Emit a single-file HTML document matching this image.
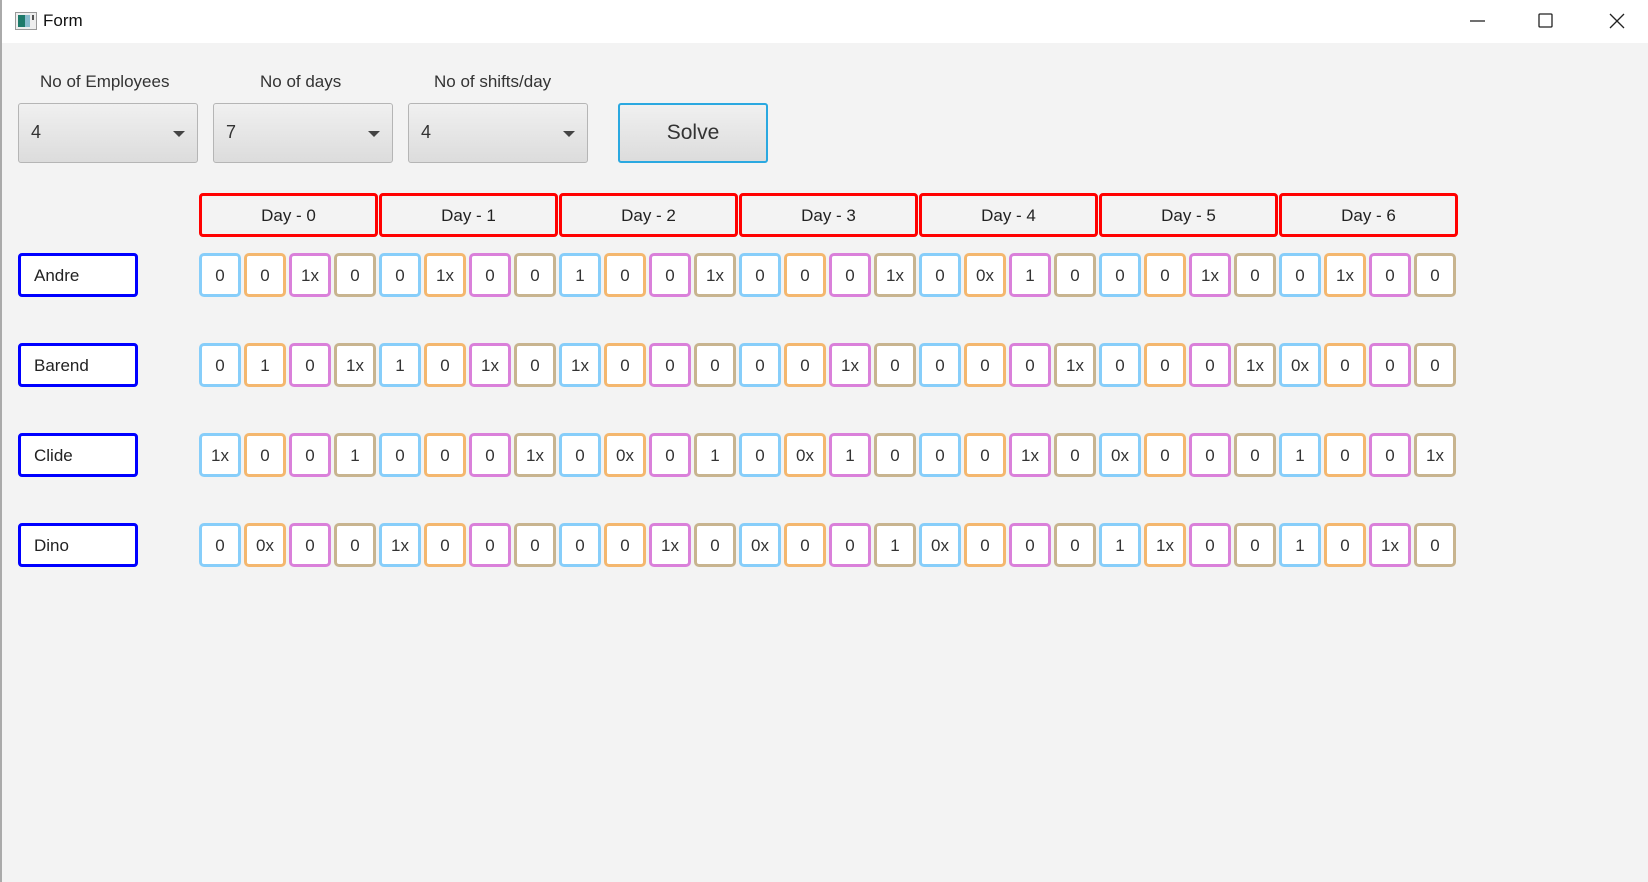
<!DOCTYPE html>
<html><head><style>
*{box-sizing:border-box;margin:0;padding:0}
body{width:1648px;height:882px;background:#f3f3f3;font-family:"Segoe UI","Liberation Sans",sans-serif;color:#333;position:relative;overflow:hidden}
.lb{position:absolute;left:0;top:0;width:2px;height:882px;background:#aaa;z-index:5}
.title{position:absolute;left:0;top:0;width:1648px;height:43px;background:#fff}
.title .t{position:absolute;left:43px;top:11px;font-size:17px;color:#111}
.lbl{position:absolute;top:72px;font-size:17px;color:#333}
.dd{position:absolute;top:103px;height:60px;width:180px;border:1px solid #b5b5b5;border-radius:3px;background:linear-gradient(#f0f0f0,#dcdcdc);font-size:18px}
.dd span{position:absolute;left:12px;top:18px}
.dd i{position:absolute;right:12px;top:27px;border-left:6px solid transparent;border-right:6px solid transparent;border-top:6px solid #444}
.solve{position:absolute;left:618px;top:103px;width:150px;height:60px;border:2px solid #2aa8e0;border-radius:3px;background:linear-gradient(#f0f0f0,#dcdcdc);font-size:21px;text-align:center;line-height:56px}
.day{position:absolute;top:193px;width:179px;height:44px;border:3px solid #f00;border-radius:4px;text-align:center;line-height:40px;font-size:17px;color:#222}
.name{position:absolute;left:18px;width:120px;height:44px;border:3px solid #00f;border-radius:4px;background:#fff;font-size:17px;line-height:40px;padding-left:13px;color:#222}
.row{position:absolute;left:199px;display:flex;gap:3px}
.row b{font-weight:normal;width:42px;height:44px;border:3px solid;border-radius:5px;background:#fff;text-align:center;line-height:40px;font-size:17px;color:#333}
.row b:nth-child(4n+1){border-color:#87cefa}
.row b:nth-child(4n+2){border-color:#f4b76e}
.row b:nth-child(4n+3){border-color:#da80da}
.row b:nth-child(4n+4){border-color:#c8b48f}
</style></head><body>
<div class="lb"></div>
<div class="title">
<svg style="position:absolute;left:15px;top:12px" width="22" height="18"><rect x="0.5" y="0.5" width="21" height="17" fill="#eee" stroke="#999"/><rect x="3" y="3" width="7" height="12" fill="#1e7a6a"/><rect x="10" y="3" width="5" height="12" fill="#8bc"/><rect x="17" y="3" width="2" height="5" fill="#555"/></svg>
<span class="t">Form</span>
<svg style="position:absolute;left:1470px;top:14px" width="18" height="14"><line x1="0" y1="7" x2="15" y2="7" stroke="#222" stroke-width="1.3"/></svg>
<svg style="position:absolute;left:1538px;top:13px" width="16" height="16"><rect x="1" y="1" width="13" height="13" rx="1" fill="none" stroke="#222" stroke-width="1.3"/></svg>
<svg style="position:absolute;left:1609px;top:13px" width="16" height="16"><path d="M1 1L15 15M15 1L1 15" stroke="#222" stroke-width="1.3"/></svg>
</div>
<div class="lbl" style="left:40px">No of Employees</div>
<div class="lbl" style="left:260px">No of days</div>
<div class="lbl" style="left:434px">No of shifts/day</div>
<div class="dd" style="left:18px"><span>4</span><i></i></div>
<div class="dd" style="left:213px"><span>7</span><i></i></div>
<div class="dd" style="left:408px"><span>4</span><i></i></div>
<div class="solve">Solve</div>
<div class="day" style="left:199px">Day - 0</div>
<div class="day" style="left:379px">Day - 1</div>
<div class="day" style="left:559px">Day - 2</div>
<div class="day" style="left:739px">Day - 3</div>
<div class="day" style="left:919px">Day - 4</div>
<div class="day" style="left:1099px">Day - 5</div>
<div class="day" style="left:1279px">Day - 6</div>
<div class="name" style="top:253px">Andre</div>
<div class="name" style="top:343px">Barend</div>
<div class="name" style="top:433px">Clide</div>
<div class="name" style="top:523px">Dino</div>
<div class="row" style="top:253px"><b>0</b><b>0</b><b>1x</b><b>0</b><b>0</b><b>1x</b><b>0</b><b>0</b><b>1</b><b>0</b><b>0</b><b>1x</b><b>0</b><b>0</b><b>0</b><b>1x</b><b>0</b><b>0x</b><b>1</b><b>0</b><b>0</b><b>0</b><b>1x</b><b>0</b><b>0</b><b>1x</b><b>0</b><b>0</b></div>
<div class="row" style="top:343px"><b>0</b><b>1</b><b>0</b><b>1x</b><b>1</b><b>0</b><b>1x</b><b>0</b><b>1x</b><b>0</b><b>0</b><b>0</b><b>0</b><b>0</b><b>1x</b><b>0</b><b>0</b><b>0</b><b>0</b><b>1x</b><b>0</b><b>0</b><b>0</b><b>1x</b><b>0x</b><b>0</b><b>0</b><b>0</b></div>
<div class="row" style="top:433px"><b>1x</b><b>0</b><b>0</b><b>1</b><b>0</b><b>0</b><b>0</b><b>1x</b><b>0</b><b>0x</b><b>0</b><b>1</b><b>0</b><b>0x</b><b>1</b><b>0</b><b>0</b><b>0</b><b>1x</b><b>0</b><b>0x</b><b>0</b><b>0</b><b>0</b><b>1</b><b>0</b><b>0</b><b>1x</b></div>
<div class="row" style="top:523px"><b>0</b><b>0x</b><b>0</b><b>0</b><b>1x</b><b>0</b><b>0</b><b>0</b><b>0</b><b>0</b><b>1x</b><b>0</b><b>0x</b><b>0</b><b>0</b><b>1</b><b>0x</b><b>0</b><b>0</b><b>0</b><b>1</b><b>1x</b><b>0</b><b>0</b><b>1</b><b>0</b><b>1x</b><b>0</b></div>
</body></html>
